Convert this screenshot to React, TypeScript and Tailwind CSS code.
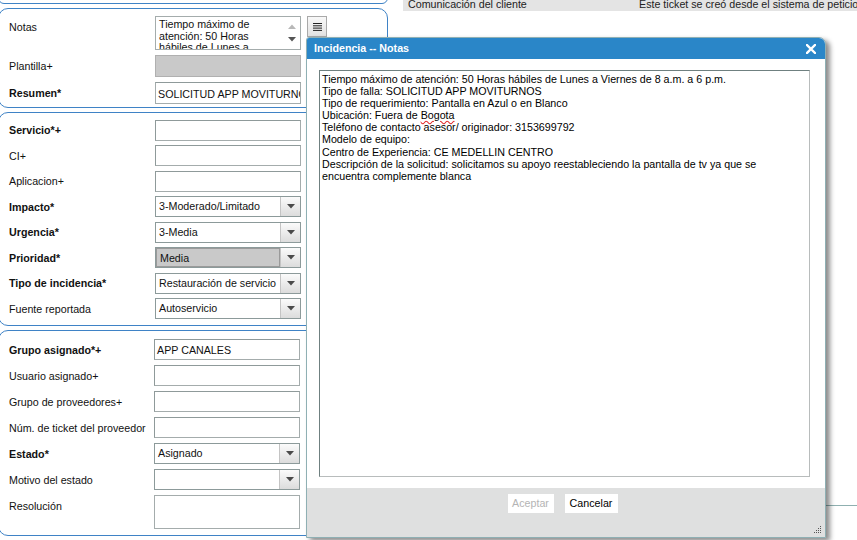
import React from "react";

const Triangle = () => (
  <svg width="8" height="5" viewBox="0 0 8 5">
    <path d="M0 0 L8 0 L4 4.5 Z" fill="#4a4a4a" />
  </svg>
);

const TextInput = ({ value, bg }: { value?: string; bg?: string }) => (
  <div
    className={`h-[21px] w-[146px] shrink-0 border border-[#a4acac] border-t-[#8f9a9a] border-l-[#8f9a9a] pl-[2px] pt-[1px] leading-[19px] whitespace-nowrap overflow-hidden ${
      bg ?? "bg-white"
    }`}
  >
    {value}
  </div>
);

const Select = ({ value, gray }: { value?: string; gray?: boolean }) => (
  <div className="flex h-[21px] w-[146px] shrink-0 border border-[#8c9a9a] bg-white">
    <div
      className={`flex-1 pl-[3px] leading-[19px] whitespace-nowrap overflow-hidden ${
        gray ? "bg-[#c9c9c9] border border-[#9a9a9a]" : ""
      }`}
    >
      {value}
    </div>
    <div className="flex w-[20px] items-center justify-center border-l border-[#c4c4c4] bg-gradient-to-b from-[#fbfbfb] to-[#dcdcdc]">
      <Triangle />
    </div>
  </div>
);

const Row = ({
  label,
  bold,
  children,
  labelW = "w-[156px]",
}: {
  label: string;
  bold?: boolean;
  children: React.ReactNode;
  labelW?: string;
}) => (
  <div className="flex items-center h-[21px]">
    <div
      className={`${labelW} shrink-0 pl-[10px] whitespace-nowrap ${
        bold ? "font-bold" : ""
      }`}
    >
      {label}
    </div>
    {children}
  </div>
);

const Section = ({
  children,
  className = "",
}: {
  children?: React.ReactNode;
  className?: string;
}) => (
  <div
    className={`w-[390px] -ml-[2px] border border-[#3f83c6] rounded-[10px] bg-white ${className}`}
  >
    {children}
  </div>
);

export default function App() {
  return (
    <div className="relative w-[857px] h-[540px] overflow-hidden bg-white font-['Liberation_Sans',Arial,sans-serif] text-[10.7px] text-[#111]">
      <div className="flex h-full">
        {/* Left column */}
        <div className="w-[388px] shrink-0 flex flex-col gap-[4px]">
          <Section className="h-[12px] -mt-[8px]" />

          {/* Section 2 */}
          <Section className="h-[100px] pt-[7px]">
            <div className="flex items-start h-[34px]">
              <div className="w-[156px] shrink-0 pl-[10px] pt-[3px]">Notas</div>
              <div className="relative flex h-[34px] w-[146px] shrink-0 border border-[#a4acac] bg-white overflow-hidden">
                <div className="flex-1 pl-[3px] pt-[2px] leading-[11.5px] overflow-hidden">
                  Tiempo máximo de atención: 50 Horas hábiles de Lunes a Viernes
                </div>
                <div className="w-[16px] flex flex-col items-center justify-between py-[7px]">
                  <svg width="8" height="5" viewBox="0 0 8 5">
                    <path d="M0 5 L8 5 L4 0.5 Z" fill="#b8b8b8" />
                  </svg>
                  <svg width="8" height="5" viewBox="0 0 8 5">
                    <path d="M0 0 L8 0 L4 4.5 Z" fill="#555" />
                  </svg>
                </div>
              </div>
              <div className="ml-[6px] flex h-[21px] w-[20px] items-center justify-center border border-[#a9a9a9] bg-gradient-to-b from-[#f8f8f8] to-[#e2e2e2]">
                <svg width="9" height="8" viewBox="0 0 9 8">
                  <rect x="0" y="0" width="9" height="1" fill="#222" />
                  <rect x="0" y="2.3" width="9" height="1" fill="#222" />
                  <rect x="0" y="4.6" width="9" height="1" fill="#222" />
                  <rect x="0" y="6.9" width="9" height="1" fill="#222" />
                </svg>
              </div>
            </div>
            <div className="mt-[5px] flex items-center h-[22px]">
              <div className="w-[156px] shrink-0 pl-[10px]">Plantilla+</div>
              <div className="h-[22px] w-[146px] border border-[#b0b0b0] bg-[#c9c9c9]" />
            </div>
            <div className="mt-[5px] flex items-center h-[22px]">
              <div className="w-[156px] shrink-0 pl-[10px] font-bold">Resumen*</div>
              <div className="h-[22px] w-[146px] border border-[#a4acac] border-t-[#8f9a9a] bg-white pl-[2px] leading-[22px] whitespace-nowrap overflow-hidden">
                SOLICITUD APP MOVITURNOS
              </div>
            </div>
          </Section>

          {/* Section 3 */}
          <Section className="pt-[7px] pb-[6px]">
            <div className="flex flex-col gap-[4.45px]">
              <Row label="Servicio*+" bold>
                <TextInput />
              </Row>
              <Row label="CI+">
                <TextInput />
              </Row>
              <Row label="Aplicacion+">
                <TextInput />
              </Row>
              <Row label="Impacto*" bold>
                <Select value="3-Moderado/Limitado" />
              </Row>
              <Row label="Urgencia*" bold>
                <Select value="3-Media" />
              </Row>
              <Row label="Prioridad*" bold>
                <Select value="Media" gray />
              </Row>
              <Row label="Tipo de incidencia*" bold>
                <Select value="Restauración de servicio" />
              </Row>
              <Row label="Fuente reportada">
                <Select value="Autoservicio" />
              </Row>
            </div>
          </Section>

          {/* Section 4 */}
          <Section className="pt-[8px] pb-[6px]">
            <div className="flex flex-col gap-[5px]">
              <Row label="Grupo asignado*+" bold labelW="w-[155px]">
                <TextInput value="APP CANALES" />
              </Row>
              <Row label="Usuario asignado+" labelW="w-[155px]">
                <TextInput />
              </Row>
              <Row label="Grupo de proveedores+" labelW="w-[155px]">
                <TextInput />
              </Row>
              <Row label="Núm. de ticket del proveedor" labelW="w-[155px]">
                <TextInput />
              </Row>
              <Row label="Estado*" bold labelW="w-[155px]">
                <Select value="Asignado" />
              </Row>
              <Row label="Motivo del estado" labelW="w-[155px]">
                <Select />
              </Row>
              <div className="flex items-start h-[34px]">
                <div className="w-[155px] shrink-0 pl-[10px] pt-[3px]">Resolución</div>
                <div className="h-[34px] w-[146px] border border-[#a4acac] bg-white" />
              </div>
            </div>
          </Section>
        </div>

        {/* Divider lines */}
        <div className="ml-[10px] w-px h-full bg-[#a8a8a8]" />
        <div className="ml-[5px] w-px h-full bg-[#b8b8b8]" />

        {/* Right panel */}
        <div className="flex-1 flex flex-col">
          <div className="h-[11px] bg-[#e4e4e4] flex whitespace-nowrap overflow-hidden leading-[10px] text-[#222]">
            <div className="pl-[5px] w-[236px] -mt-[1px]">Comunicación del cliente</div>
            <div className="-mt-[1px]">Este ticket se creó desde el sistema de peticiones</div>
          </div>
          <div className="mt-[494px] h-px bg-[#8fb0b0]" />
        </div>
      </div>

      {/* Modal */}
      <div className="absolute left-[306px] top-[37px] w-[520px] h-[501px] flex flex-col border border-[#8fb0b4] rounded-tl-[3px] rounded-tr-[7px] bg-white shadow-[4px_3px_5px_rgba(0,0,0,0.45)]">
        <div className="h-[21px] shrink-0 flex items-center justify-between bg-[#2a86c8] rounded-tl-[2px] rounded-tr-[6px] pl-[7px] pr-[9px]">
          <span className="font-bold text-white">Incidencia -- Notas</span>
          <svg width="10" height="10" viewBox="0 0 10 10">
            <path d="M1 1 L9 9 M9 1 L1 9" stroke="#fff" strokeWidth="2.4" strokeLinecap="square" />
          </svg>
        </div>
        <div className="flex-1 pt-[11px] pl-[12px] pr-[15px] pb-[11px]">
          <div className="h-full border border-[#b8bcbc] border-t-[#6f8080] border-l-[#6f8080] pl-[2px] pt-[2px] leading-[12.1px] text-black">
            <div>Tiempo máximo de atención: 50 Horas hábiles de Lunes a Viernes de 8 a.m. a 6 p.m.</div>
            <div>Tipo de falla: SOLICITUD APP MOVITURNOS</div>
            <div>Tipo de requerimiento: Pantalla en Azul o en Blanco</div>
            <div>
              Ubicación: Fuera de{" "}
              <span className="underline decoration-wavy decoration-[#e02828] underline-offset-[1px]">Bogota</span>
            </div>
            <div>Teléfono de contacto asesor/ originador: 3153699792</div>
            <div>Modelo de equipo:</div>
            <div>Centro de Experiencia: CE MEDELLIN CENTRO</div>
            <div className="w-[470px]">
              Descripción de la solicitud: solicitamos su apoyo reestableciendo la pantalla de tv ya que se
              encuentra complemente blanca
            </div>
          </div>
        </div>
        <div className="relative h-[49px] shrink-0 bg-[#dfe0e0] flex justify-center gap-[11px] pt-[6px] pr-[7px]">
          <div className="h-[19px] w-[46px] text-center bg-white text-[#b4b4b4] leading-[19px]">Aceptar</div>
          <div className="h-[19px] w-[53px] text-center bg-white text-black leading-[19px]">Cancelar</div>
          <svg className="absolute right-[3px] bottom-[3px]" width="10" height="10" viewBox="0 0 10 10">
            <g fill="#555">
              <rect x="8" y="2" width="1" height="1" />
              <rect x="6" y="4" width="1" height="1" />
              <rect x="8" y="4" width="1" height="1" />
              <rect x="4" y="6" width="1" height="1" />
              <rect x="6" y="6" width="1" height="1" />
              <rect x="8" y="6" width="1" height="1" />
              <rect x="2" y="8" width="1" height="1" />
              <rect x="4" y="8" width="1" height="1" />
              <rect x="6" y="8" width="1" height="1" />
              <rect x="8" y="8" width="1" height="1" />
            </g>
          </svg>
        </div>
      </div>
    </div>
  );
}
